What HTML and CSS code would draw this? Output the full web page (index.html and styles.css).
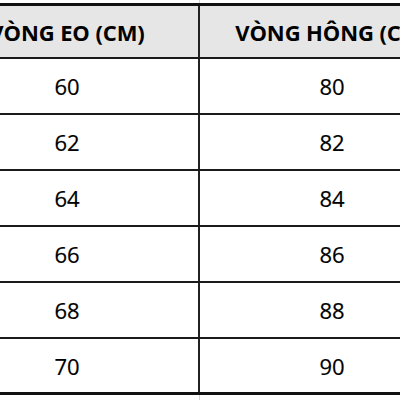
FILE: index.html
```html
<!DOCTYPE html>
<html lang="vi">
<head>
<meta charset="utf-8">
<link rel="stylesheet" href="styles.css">
</head>
<body>
<div class="sheet">
  <div class="table">
    <div class="row head">
      <div class="cell">VÒNG EO (CM)</div>
      <div class="cell">VÒNG HÔNG (CM)</div>
    </div>
    <div class="row"><div class="cell">60</div><div class="cell">80</div></div>
    <div class="row"><div class="cell">62</div><div class="cell">82</div></div>
    <div class="row"><div class="cell">64</div><div class="cell">84</div></div>
    <div class="row"><div class="cell">66</div><div class="cell">86</div></div>
    <div class="row"><div class="cell">68</div><div class="cell">88</div></div>
    <div class="row last"><div class="cell">70</div><div class="cell">90</div></div>
  </div>
</div>
</body>
</html>
```
FILE: styles.css
```css
html, body {
  margin: 0;
  padding: 0;
  background: #ffffff;
}
.sheet {
  width: 400px;
  height: 400px;
  overflow: hidden;
  padding-top: 3px;
  box-sizing: border-box;
  font-family: "Open Sans", "Liberation Sans", sans-serif;
  color: #000000;
  background: linear-gradient(to right, transparent 199px, #d4d4d4 199px, #d4d4d4 200px, transparent 200px);
}
.table {
  margin-left: -64px;
  width: 528px;
  background: #ffffff;
  border-top: 3px solid #111111;
  border-bottom: 3px solid #111111;
}
.row {
  display: grid;
  grid-template-columns: 264px 264px;
  height: 56px;
  border-bottom: 2px solid #1a1a1a;
  box-sizing: border-box;
}
.row.last {
  border-bottom: none;
  height: 53px;
}
.row.head {
  height: 53px;
  background: #e6e6e6;
}
.cell {
  display: flex;
  align-items: center;
  justify-content: center;
  font-size: 22px;
  white-space: nowrap;
  -webkit-text-stroke: 0.2px #000000;
}
.cell:first-child {
  border-right: 2px solid #222222;
}
.head .cell {
  font-weight: 700;
  font-size: 22px;
  letter-spacing: -0.1px;
  -webkit-text-stroke: 0;
}
```
